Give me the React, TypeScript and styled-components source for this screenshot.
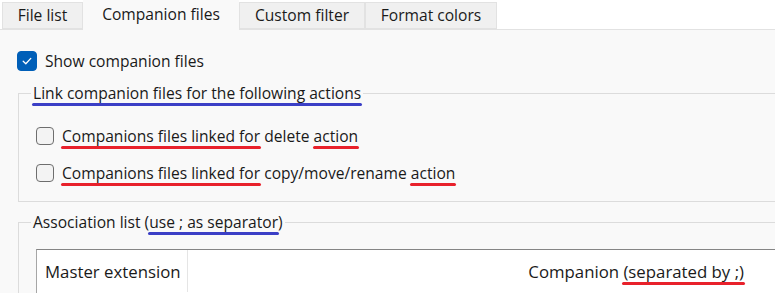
import React from "react";
import styled, { createGlobalStyle } from "styled-components";

const GlobalStyle = createGlobalStyle`
  html, body {
    margin: 0;
    padding: 0;
    background: #ffffff;
  }
  body {
    font-family: "Open Sans", "Noto Sans", sans-serif;
    font-size: 15.6px;
    color: #1a1a1a;
    overflow: hidden;
  }
`;

const tabs = [
  { label: "File list", width: 81 },
  { label: "Companion files", width: 156 },
  { label: "Custom filter", width: 126 },
  { label: "Format colors", width: 132 },
];

const App = () => {
  return (
    <>
      <GlobalStyle />
      <Window>
        <TabStrip>
          {tabs.map((t, i) => (
            <Tab key={t.label} $active={i === 1} $width={t.width}>
              {t.label}
            </Tab>
          ))}
        </TabStrip>

        <Panel>
          <CheckRow>
            <CheckBox checked />
            <span>Show companion files</span>
          </CheckRow>

          <Group>
            <Legend>
              <Mark $color="blue">Link companion files for the following actions</Mark>
            </Legend>
            <GroupBody>
              <CheckList>
                <CheckRow>
                  <CheckBox />
                  <span>
                    <Mark $color="red">Companions files linked for</Mark> delete{" "}
                    <Mark $color="red">action</Mark>
                  </span>
                </CheckRow>
                <CheckRow>
                  <CheckBox />
                  <span>
                    <Mark $color="red">Companions files linked for</Mark> copy/move/rename{" "}
                    <Mark $color="red">action</Mark>
                  </span>
                </CheckRow>
              </CheckList>
            </GroupBody>
          </Group>

          <Group $tight>
            <Legend>
              Association list (<Mark $color="blue">use ; as separator</Mark>)
            </Legend>
            <GroupBody $list>
              <ListBox>
                <HeaderRow>
                  <HeaderCell $width={151}>Master extension</HeaderCell>
                  <HeaderCell $right>
                    <span>
                      Companion <Mark $color="red">(separated by ;)</Mark>
                    </span>
                  </HeaderCell>
                </HeaderRow>
              </ListBox>
            </GroupBody>
          </Group>
        </Panel>
      </Window>
    </>
  );
};

const CheckBox = ({ checked = false }: { checked?: boolean }) => (
  <Box $checked={checked}>
    {checked && (
      <svg width="12" height="12" viewBox="0 0 12 12">
        <path
          d="M2.2 6.3 L4.8 8.8 L9.8 3.4"
          fill="none"
          stroke="#ffffff"
          strokeWidth="1.3"
          strokeLinecap="round"
          strokeLinejoin="round"
        />
      </svg>
    )}
  </Box>
);

export default App;

const Window = styled.div`
  width: 775px;
  height: 293px;
  overflow: hidden;
  background: #ffffff;
`;

const TabStrip = styled.div`
  display: flex;
  align-items: flex-end;
  height: 29px;
  padding-left: 2px;
`;

const Tab = styled.div<{ $active?: boolean; $width: number }>`
  display: flex;
  align-items: center;
  justify-content: center;
  box-sizing: border-box;
  width: ${(p) => p.$width}px;
  height: ${(p) => (p.$active ? "30px" : "27px")};
  margin-bottom: ${(p) => (p.$active ? "-1px" : "0")};
  padding-bottom: ${(p) => (p.$active ? "3px" : "1px")};
  background: ${(p) => (p.$active ? "#f9f9f9" : "#f0f0f0")};
  border: 1px solid #e2e2e2;
  border-bottom: ${(p) => (p.$active ? "none" : "1px solid #e2e2e2")};
  border-left-width: ${(p) => (p.$active ? "0" : "1px")};
  border-right-width: ${(p) => (p.$active ? "0" : "1px")};
  border-top-color: ${(p) => (p.$active ? "transparent" : "#e2e2e2")};
  color: #1a1a1a;
  white-space: nowrap;
  position: relative;
  z-index: ${(p) => (p.$active ? 1 : 0)};
`;

const Panel = styled.div`
  box-sizing: border-box;
  height: 264px;
  background: #f9f9f9;
  border-top: 1px solid #e2e2e2;
  padding: 21px 0 0 17px;
  overflow: hidden;
`;

const CheckRow = styled.label`
  display: flex;
  align-items: center;
  gap: 8px;
  height: 20px;
  line-height: 20px;
  white-space: nowrap;
`;

const Box = styled.span<{ $checked?: boolean }>`
  display: inline-flex;
  align-items: center;
  justify-content: center;
  box-sizing: border-box;
  flex: none;
  width: ${(p) => (p.$checked ? "20px" : "18px")};
  height: ${(p) => (p.$checked ? "20px" : "18px")};
  border-radius: 4px;
  background: ${(p) => (p.$checked ? "#005fb8" : "#f3f3f3")};
  border: 1px solid ${(p) => (p.$checked ? "#005fb8" : "#6e6e6e")};
`;

const Group = styled.fieldset<{ $tight?: boolean }>`
  margin: ${(p) => (p.$tight ? "10px" : "12px")} -60px 0 1px;
  padding: 0 0 0 12px;
  border: 1px solid #dcdcdc;
  min-width: 0;
`;

const Legend = styled.legend`
  padding: 0 2px;
  line-height: 20px;
  white-space: nowrap;
`;

const GroupBody = styled.div<{ $list?: boolean }>`
  padding: ${(p) => (p.$list ? "17px 0 0 5px" : "23px 0 18px 5px")};
`;

const CheckList = styled.div`
  display: flex;
  flex-direction: column;
  gap: 17px;
`;

const Mark = styled.span<{ $color: "red" | "blue" }>`
  position: relative;
  &::after {
    content: "";
    position: absolute;
    left: -1px;
    right: -1px;
    bottom: -2px;
    height: 3px;
    border-radius: 2px;
    background: ${(p) => (p.$color === "red" ? "#e8212b" : "#3b3fc6")};
  }
`;

const ListBox = styled.div`
  width: 760px;
  height: 80px;
  background: #ffffff;
  border-top: 1px solid #858585;
  border-left: 1px solid #a6a6a6;
`;

const HeaderRow = styled.div`
  display: flex;
  height: 42px;
  font-size: 16.8px;
`;

const HeaderCell = styled.div<{ $width?: number; $right?: boolean }>`
  display: flex;
  align-items: center;
  justify-content: ${(p) => (p.$right ? "flex-end" : "flex-start")};
  box-sizing: border-box;
  ${(p) => (p.$width ? `width: ${p.$width}px; flex: none;` : "flex: 1;")}
  padding: ${(p) => (p.$right ? "0 53px 0 0" : "0 0 0 8px")};
  border-right: ${(p) => (p.$width ? "1px solid #e5e5e5" : "none")};
  white-space: nowrap;
`;
